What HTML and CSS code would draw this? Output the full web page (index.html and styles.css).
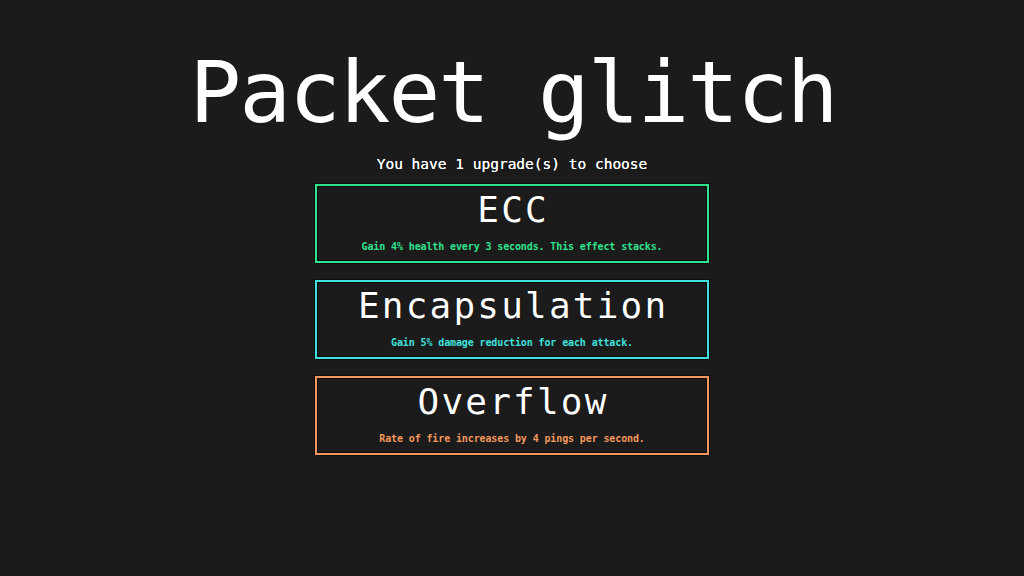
FILE: index.html
```html
<!DOCTYPE html>
<html lang="en">
<head>
<meta charset="utf-8">
<title>Packet glitch</title>
<link rel="stylesheet" href="styles.css">
</head>
<body>
<main class="screen">
  <h1 class="game-title">Packet glitch</h1>
  <p class="subtitle">You have 1 upgrade(s) to choose</p>
  <div class="upgrades">
    <button class="upgrade upgrade-green">
      <span class="upgrade-name">ECC</span>
      <span class="upgrade-desc">Gain 4% health every 3 seconds. This effect stacks.</span>
    </button>
    <button class="upgrade upgrade-cyan">
      <span class="upgrade-name">Encapsulation</span>
      <span class="upgrade-desc">Gain 5% damage reduction for each attack.</span>
    </button>
    <button class="upgrade upgrade-orange">
      <span class="upgrade-name">Overflow</span>
      <span class="upgrade-desc">Rate of fire increases by 4 pings per second.</span>
    </button>
  </div>
</main>
</body>
</html>
```

FILE: styles.css
```css
html, body {
  margin: 0;
  padding: 0;
  background: #1b1b1b;
  width: 1024px;
  height: 576px;
  overflow: hidden;
}

.screen {
  display: flex;
  flex-direction: column;
  align-items: center;
  padding-top: 42px;
  font-family: "DejaVu Sans Mono", "Liberation Mono", monospace;
  color: #ffffff;
}

.game-title {
  margin: 0;
  font-size: 86px;
  line-height: 100px;
  font-weight: normal;
  letter-spacing: -2px;
  margin-right: -2px;
  text-shadow: 0 0 1px #000;
}

.subtitle {
  margin: 12px 0 0;
  font-size: 14.5px;
  line-height: 20px;
  text-shadow: 0 0 0.4px #fff;
}

.upgrades {
  margin-top: 10px;
  display: flex;
  flex-direction: column;
  gap: 17px;
}

.upgrade {
  box-sizing: border-box;
  width: 394px;
  height: 79px;
  margin: 0;
  padding: 4px 0 0;
  background: #1b1b1b;
  border: 2px solid;
  box-shadow: 0 0 0 1px #0e0e0e, inset 0 0 0 1px #0e0e0e;
  display: flex;
  flex-direction: column;
  align-items: center;
  font-family: inherit;
  color: #fff;
  cursor: pointer;
}

.upgrade-name {
  font-size: 36px;
  line-height: 40px;
  letter-spacing: 2.2px;
  margin-right: -2.2px;
  color: #ffffff;
  text-shadow: 0 0 1px #000;
}

.upgrade-desc {
  margin-top: 11px;
  font-size: 10px;
  line-height: 12px;
  letter-spacing: -0.12px;
  font-weight: bold;
}

.upgrade-green { border-color: #2fe28f; }
.upgrade-green .upgrade-desc { color: #2fe28f; }

.upgrade-cyan { border-color: #3fe0dd; }
.upgrade-cyan .upgrade-desc { color: #3fe0dd; }

.upgrade-orange { border-color: #f2975d; }
.upgrade-orange .upgrade-desc { color: #f2975d; }
```
